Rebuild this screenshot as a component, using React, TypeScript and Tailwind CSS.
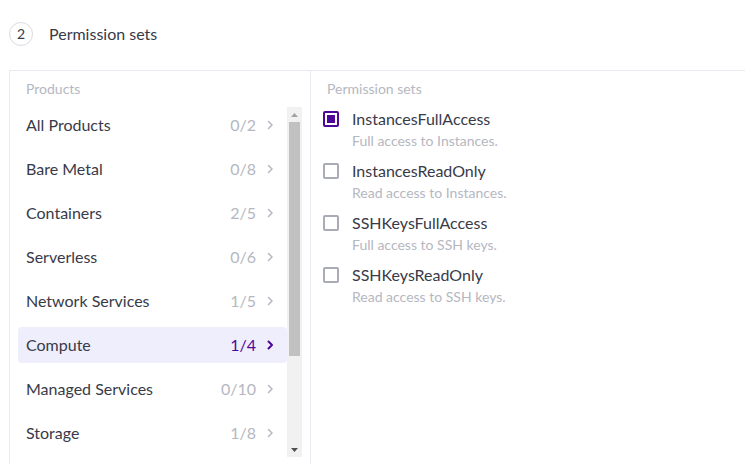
import React from "react";

const products = [
  { name: "All Products", count: "0/2" },
  { name: "Bare Metal", count: "0/8" },
  { name: "Containers", count: "2/5" },
  { name: "Serverless", count: "0/6" },
  { name: "Network Services", count: "1/5" },
  { name: "Compute", count: "1/4", active: true },
  { name: "Managed Services", count: "0/10" },
  { name: "Storage", count: "1/8" },
];

const perms = [
  { name: "InstancesFullAccess", desc: "Full access to Instances.", checked: true },
  { name: "InstancesReadOnly", desc: "Read access to Instances." },
  { name: "SSHKeysFullAccess", desc: "Full access to SSH keys." },
  { name: "SSHKeysReadOnly", desc: "Read access to SSH keys." },
];

function Chevron({ active }: { active?: boolean }) {
  return (
    <svg width="16" height="16" viewBox="0 0 16 16" fill="none">
      <path
        d="M6.5 4.5 L10 8 L6.5 11.5"
        stroke={active ? "#4f0599" : "#b8bac4"}
        strokeWidth={active ? 2 : 1.6}
        strokeLinecap="round"
        strokeLinejoin="round"
      />
    </svg>
  );
}

function Scrollbar() {
  return (
    <div className="w-[15px] h-full bg-[#f1f1f1] flex flex-col items-center shrink-0">
      <div className="h-[15px] w-full flex items-center justify-center">
        <svg width="7" height="4" viewBox="0 0 7 4">
          <path d="M0 4 L3.5 0 L7 4 Z" fill="#a3a3a3" />
        </svg>
      </div>
      <div className="flex-1 w-full px-[2px]">
        <div className="h-[234px] w-full bg-[#c1c1c1]" />
      </div>
      <div className="h-[15px] w-full flex items-center justify-center">
        <svg width="7" height="4" viewBox="0 0 7 4">
          <path d="M0 0 L7 0 L3.5 4 Z" fill="#505050" />
        </svg>
      </div>
    </div>
  );
}

export default function App() {
  return (
    <div
      className="w-[745px] h-[464px] overflow-hidden bg-white text-[#383a48]"
      style={{ fontFamily: "Lato, 'Noto Sans', sans-serif" }}
    >
      <div className="h-[70px] flex items-center pb-[2px] pl-[9px]">
        <div className="w-[24px] h-[24px] rounded-full border border-[#d9dae3] flex items-center justify-center text-[14px] leading-none">
          2
        </div>
        <div className="ml-[16px] text-[16px]">Permission sets</div>
      </div>
      <div className="ml-[9px] border-l border-t border-[#e9eaf0] flex h-[394px]">
        <div className="w-[301px] border-r border-[#e9eaf0] flex flex-col">
          <div className="pt-[8px] pl-[16px] text-[14px] leading-[20px] text-[#b5b7c1]">Products</div>
          <div className="mt-[8px] ml-[8px] mr-[8px] h-[350px] flex">
            <div className="flex-1 overflow-hidden flex flex-col gap-2">
              {products.map((p) => (
                <div
                  key={p.name}
                  className={`h-9 shrink-0 flex items-center pl-2 pr-[9px] rounded-[4px] text-[16px] ${
                    p.active ? "bg-[#efeefd]" : ""
                  }`}
                >
                  <span className="flex-1">{p.name}</span>
                  <span className={`${p.active ? "text-[#4f0599]" : "text-[#b5b7c1]"}`}>{p.count}</span>
                  <span className="ml-[6px]">
                    <Chevron active={p.active} />
                  </span>
                </div>
              ))}
            </div>
            <Scrollbar />
          </div>
        </div>
        <div className="flex-1 flex flex-col">
          <div className="pt-[8px] pl-[16px] text-[14px] leading-[20px] text-[#b5b7c1]">Permission sets</div>
          <div className="mt-[9px] flex flex-col gap-[9px] pl-[12px]">
            {perms.map((p) => (
              <div key={p.name} className="flex">
                <div className="h-[22px] flex items-center">
                  {p.checked ? (
                    <div className="w-4 h-4 rounded-[2px] border-2 border-[#4f0599] flex items-center justify-center">
                      <div className="w-2 h-2 bg-[#4f0599]" />
                    </div>
                  ) : (
                    <div className="w-4 h-4 rounded-[2px] border-2 border-[#a9abb6]" />
                  )}
                </div>
                <div className="ml-[13px]">
                  <div className="text-[16px] leading-[22px]">{p.name}</div>
                  <div className="mt-[1px] text-[14px] leading-[20px] text-[#b5b7c1]">{p.desc}</div>
                </div>
              </div>
            ))}
          </div>
        </div>
      </div>
    </div>
  );
}
